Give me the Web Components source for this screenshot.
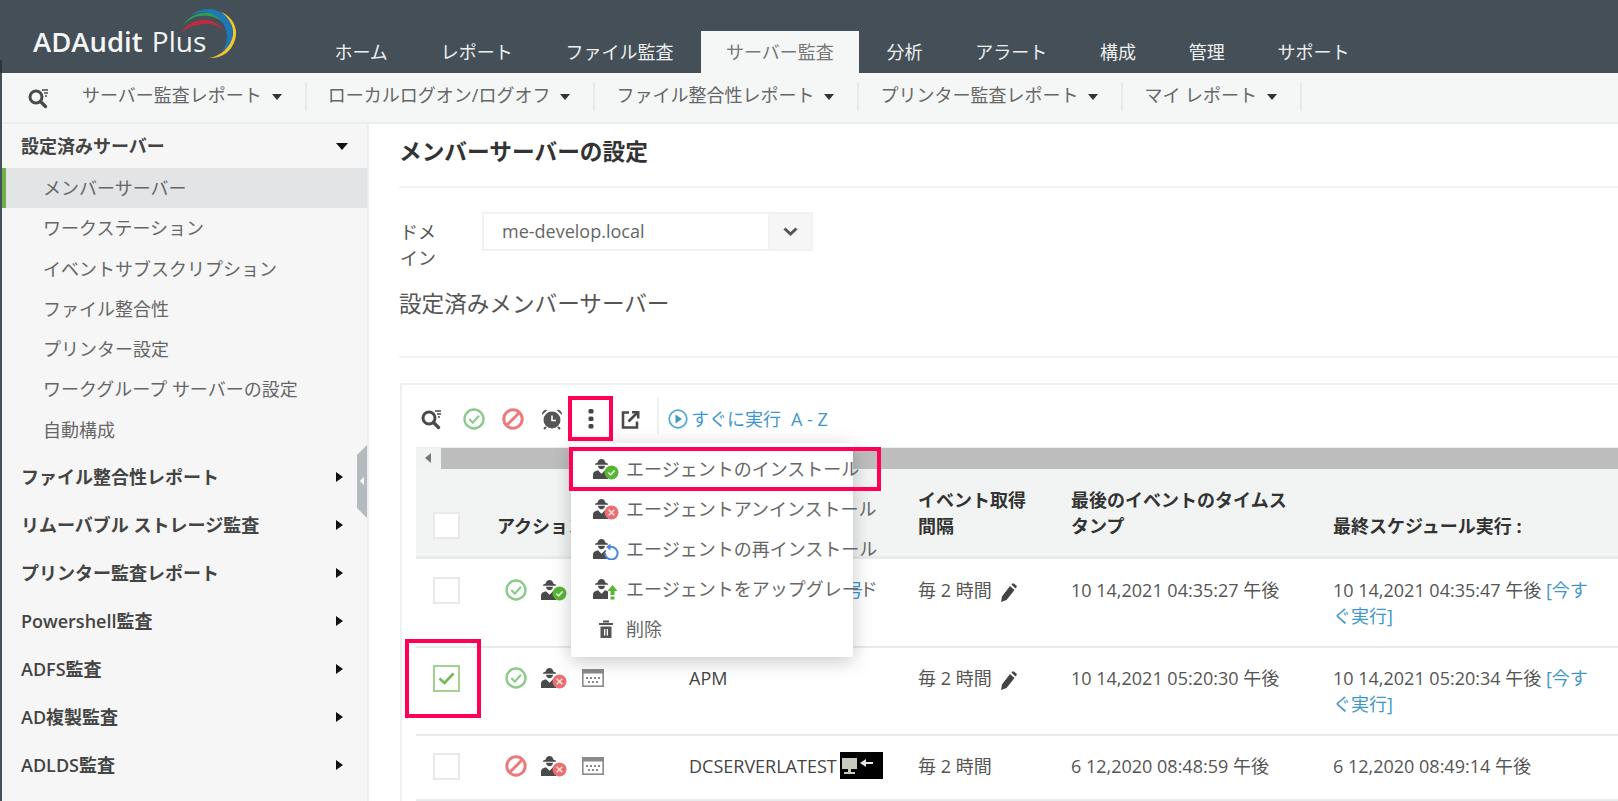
<!DOCTYPE html>
<html lang="ja">
<head>
<meta charset="utf-8">
<title>ADAudit Plus</title>
<style>
html, body { margin: 0; height: 801px; overflow: hidden; background: #fff; }
body { font: 18px/26px "Open Sans", "Noto Sans CJK JP", sans-serif; color: #555; }
</style>
</head>
<body>
<aa-page></aa-page>

<script>
// small svg icons, all drawn by hand
var AGENT = `<path d="M9.500 1c2 0 3.500 1.400 3.800 3.400l2.700 1.300v1H3v-1l2.700-1.300C6 2.400 7.500 1 9.500 1z" fill="#4a4a4a"/><path d="M6 7.800h7c-.2 2-1.500 3.500-3.500 3.500S6.200 9.800 6 7.800z" fill="#4a4a4a"/><path d="M1 21v-4.500c0-2 1.800-3.500 5-4.200l3.500 3.500 3.500-3.500c1 .2 2 .5 3 1.200V21z" fill="#4a4a4a"/>`;
var ICONS = {
  search: `<svg width="24" height="22" viewBox="0 0 24 22" fill="none" stroke="#4a4a4a"><circle cx="9" cy="10" r="6" stroke-width="3"/><path d="M13.500 14.500l5 5" stroke-width="3.400" stroke-linecap="round"/><path d="M15 3h6M17 6h4M18 9h2" stroke-width="1.300"/></svg>`,
  ok: `<svg width="22" height="22" viewBox="0 0 22 22" fill="none" stroke="#8ccb8c" stroke-width="2.400"><circle cx="11" cy="11" r="9.500"/><path d="M6.300 11l3.500 3.700 6.200-7" stroke-width="2.200"/></svg>`,
  stop: `<svg width="22" height="22" viewBox="0 0 22 22" fill="none" stroke="#ec7a7c" stroke-width="3"><circle cx="11" cy="11" r="9.200"/><path d="M4.800 17.200L17.200 4.800"/></svg>`,
  clock: `<svg width="22" height="22" viewBox="0 0 22 22"><circle cx="11" cy="12" r="8.500" fill="#555"/><path d="M1 7a4.500 4.500 0 0 1 5.500-5zM21 7a4.500 4.500 0 0 0-5.500-5z" fill="#555"/><path d="M5 19l-2 2M17 19l2 2" stroke="#555" stroke-width="2"/><path d="M11 7.500V12.500H15" fill="none" stroke="#fff" stroke-width="1.600"/></svg>`,
  kebab: `<svg width="6" height="20" viewBox="0 0 6 20" fill="#444"><rect x=".5" width="5" height="4.500" rx="1.500"/><rect x=".5" y="7.500" width="5" height="4.500" rx="1.500"/><rect x=".5" y="15" width="5" height="4.500" rx="1.500"/></svg>`,
  share: `<svg width="20" height="20" viewBox="0 0 20 20" fill="none" stroke="#4a4a4a" stroke-width="2.600"><path d="M8 3.500H2v15h14v-6"/><path d="M7.500 12.500L16.500 3.500"/><path d="M11 2h7.500v7.500h-2.600V4.600h-4.900z" fill="#4a4a4a" stroke="none"/></svg>`,
  play: `<svg width="20" height="20" viewBox="0 0 20 20"><circle cx="10" cy="10" r="8.800" fill="none" stroke="#55a9d8" stroke-width="1.800"/><path d="M7.500 5.500l6.500 4.500-6.500 4.500z" fill="#3f97c9"/></svg>`,
  agentok: `<svg width="27" height="22" viewBox="0 0 27 22">${AGENT}<circle cx="19.500" cy="14.500" r="7" fill="#5ab536"/><path d="M16.300 14.500l2.300 2.400 4.100-4.500" fill="none" stroke="#dff3d5" stroke-width="1.600"/></svg>`,
  agentx: `<svg width="27" height="22" viewBox="0 0 27 22">${AGENT}<circle cx="19.500" cy="14.500" r="7" fill="#ea6f71"/><path d="M16.700 11.700l5.600 5.600M22.300 11.700l-5.600 5.600" stroke="#fbe3e3" stroke-width="1.500"/></svg>`,
  agentre: `<svg width="27" height="22" viewBox="0 0 27 22">${AGENT}<path d="M16 9.800a6.300 6.300 0 1 1-3 5" fill="#fff" stroke="#4a86e0" stroke-width="2"/><path d="M18.500 5.500v7l-4.500-3.500z" fill="#4a86e0"/></svg>`,
  agentup: `<svg width="27" height="22" viewBox="0 0 27 22">${AGENT}<path d="M20.500 7l5 6h-3v4h-4v-4h-3z" fill="#57b531"/><rect x="18.500" y="18.500" width="4" height="3" fill="#57b531"/></svg>`,
  trash: `<svg width="16" height="18" viewBox="0 0 16 18" fill="#555"><rect x="1" y="3" width="14" height="2"/><rect x="5" y=".5" width="6" height="2"/><path d="M2.500 6.500h11V18h-11z"/><path d="M6 9h1.300v6.500H6zM8.700 9H10v6.500H8.700z" fill="#fff"/></svg>`,
  sched: `<svg width="22" height="18" viewBox="0 0 22 18"><rect x=".8" y=".8" width="20.400" height="16.400" fill="#fff" stroke="#8a8a8a" stroke-width="1.600"/><rect x="1" y="1" width="20" height="3.500" fill="#8a8a8a"/><path d="M4 8h2v2H4zM8 8h2v2H8zM12 8h2v2h-2zM16 8h2v2h-2zM6 12h2v2H6zM10 12h2v2h-2zM14 12h2v2h-2z" fill="#8a8a8a"/></svg>`,
  pencil: `<svg width="20" height="20" viewBox="0 0 20 20" fill="#444"><path d="M3 19l1-5.500L12 3l4.500 4-8 10z"/><path d="M13.500 1.500l1-1a1 1 0 0 1 1.400 0l2.600 2.300a1 1 0 0 1 0 1.400l-1 1.300z"/></svg>`,
  chevron: `<svg width="15" height="9" viewBox="0 0 15 9" fill="none" stroke="#555" stroke-width="3"><path d="M1.500 1.500l6 5.500 6-5.500"/></svg>`,
  remote: `<svg width="43" height="27" viewBox="0 0 43 27"><rect width="43" height="27" fill="#000"/><rect x="2" y="6" width="15" height="11" fill="#c9c9bf"/><rect x="8" y="17" width="3" height="3" fill="#c9c9bf"/><rect x="4" y="20" width="11" height="2" fill="#c9c9bf"/><path d="M20 11l6-4v3h7v2h-7v3z" fill="#e6e6e6"/></svg>`
};

class AaIcon extends HTMLElement {
  connectedCallback() {
    this.attachShadow({mode: "open"});
    this.shadowRoot.innerHTML = `<style>:host{display:inline-flex;align-items:center;justify-content:center;line-height:0}</style>` + ICONS[this.getAttribute("name")];
  }
}
customElements.define("aa-icon", AaIcon);

// logo + main tabs
class AaHeader extends HTMLElement {
  connectedCallback() {
    var tabs = ["ホーム", "レポート", "ファイル監査", "サーバー監査", "分析", "アラート", "構成", "管理", "サポート"];
    this.attachShadow({mode: "open"});
    this.shadowRoot.innerHTML = `
    <style>
    :host { display: flex; height: 73px; background: #444f58; position: relative; }
    :host::after { content: ""; position: absolute; left: 0; top: 60px; width: 2px; height: 13px; background: #2c333a; }
    .logo { position: relative; width: 308px; flex: none; }
    .logo span { position: absolute; left: 33px; top: 23px; font-size: 27.500px; line-height: 36px; color: #f4f6f6; white-space: nowrap; }
    .logo b { font-weight: 600; }
    .logo i { font-style: normal; font-weight: 400; font-size: 28px; margin-left: 2px; }
    .logo svg { position: absolute; left: 178px; top: 5px; }
    nav { display: flex; align-items: flex-end; }
    a { display: block; height: 42px; line-height: 42px; padding: 0 26.400px; color: #eef0f0; }
    a.on { background: #f5f6f6; color: #777; padding: 0 25.200px; margin: 0 1px 0 1px; }
    </style>
    <div class="logo">
      <span><b>ADAudit</b> <i>Plus</i></span>
      <svg width="62" height="58" viewBox="0 0 62 58">
        <path d="M4 28C8 17 24 12 36 17c4 2 8 5 10 9-5-5-12-8-20-7C17 20 9 22 4 28z" fill="#c22b3d"/>
        <path d="M5 21C11 9 27 4 40 10c5 3 9 8 11 14-5-7-12-12-21-13C20 10 11 13 5 21z" fill="#2f9c55"/>
        <path d="M13 11C22 2 37 2 46 10c8 7 11 18 7 27-2 4-5 7-9 9 5-6 6-14 4-21C45 15 37 8 27 7c-5 0-10 1-14 4z" fill="#1b79b8"/>
        <path d="M43 7c8 3 14 10 15 19 1 13-9 27-24 27h-3c12-2 22-11 24-23 1-9-4-17-12-23z" fill="#f1c52f"/>
      </svg>
    </div>
    <nav>${tabs.map(t => `<a class="${t == "サーバー監査" ? "on" : ""}">${t}</a>`).join("")}</nav>`;
  }
}
customElements.define("aa-header", AaHeader);

// second bar with the report menus
class AaSubnav extends HTMLElement {
  connectedCallback() {
    var items = ["サーバー監査レポート", "ローカルログオン/ログオフ", "ファイル整合性レポート", "プリンター監査レポート", "マイ レポート"];
    this.attachShadow({mode: "open"});
    this.shadowRoot.innerHTML = `
    <style>
    :host { display: flex; align-items: center; height: 49px; background: #f5f6f6; border-bottom: 2px solid #e9eeee; color: #666; }
    .find { width: 57px; padding-left: 25px; box-sizing: border-box; flex: none; display: flex; }
    .item { display: flex; align-items: center; height: 28px; box-sizing: border-box; margin-bottom: 2px; padding: 0 23px 3px 21px; border-right: 2px solid #e6eaea; white-space: nowrap; }
    .find + .item { padding-left: 23px; }
    .caret { width: 0; height: 0; border: 5.500px solid transparent; border-top: 6px solid #333; border-bottom: 0; margin: 3px 0 0 10px; }
    </style>
    <div class="find"><aa-icon name="search"></aa-icon></div>
    ${items.map(t => `<div class="item">${t}<span class="caret"></span></div>`).join("")}`;
  }
}
customElements.define("aa-subnav", AaSubnav);

class AaSidebar extends HTMLElement {
  connectedCallback() {
    var subs = ["メンバーサーバー", "ワークステーション", "イベントサブスクリプション", "ファイル整合性", "プリンター設定", "ワークグループ サーバーの設定", "自動構成"];
    var groups = ["ファイル整合性レポート", "リムーバブル ストレージ監査", "プリンター監査レポート", "Powershell監査", "ADFS監査", "AD複製監査", "ADLDS監査"];
    this.attachShadow({mode: "open"});
    this.shadowRoot.innerHTML = `
    <style>
    :host { display: block; width: 367px; box-sizing: border-box; flex: none; background: #f6f6f6; border-right: 2px solid #e9eeee; position: relative; }
    .head { display: flex; align-items: center; justify-content: space-between; height: 44px; padding: 0 19px 0 19px; font-weight: 600; color: #444; }
    .sub { height: 40.300px; line-height: 40px; padding-left: 41px; color: #666; white-space: nowrap; }
    .sub.on { background: #e3e4e5; box-shadow: inset 4px 0 #6fb04a; }
    .group { display: flex; align-items: center; justify-content: space-between; height: 48px; padding: 0 24px 0 19px; font-weight: 600; color: #444; white-space: nowrap; }
    .groups { margin-top: 3px; }
    .down { width: 0; height: 0; border: 6px solid transparent; border-top: 7px solid #111; border-bottom: 0; }
    .right { width: 0; height: 0; border: 5.500px solid transparent; border-left: 7px solid #111; border-right: 0; }
    .grip { position: absolute; right: 0; top: 321px; width: 10px; height: 73px; background: #b4bbbe; clip-path: polygon(0 10px, 100% 0, 100% 100%, 0 calc(100% - 10px)); }
    .grip::after { content: ""; position: absolute; left: 3px; top: 32px; border: 4px solid transparent; border-right: 4px solid #fff; border-left: 0; }
    </style>
    <div class="head">設定済みサーバー<span class="down"></span></div>
    ${subs.map((s, i) => `<div class="sub ${i == 0 ? "on" : ""}">${s}</div>`).join("")}
    <div class="groups">${groups.map(g => `<div class="group">${g}<span class="right"></span></div>`).join("")}</div>
    <div class="grip"></div>`;
  }
}
customElements.define("aa-sidebar", AaSidebar);

// one table row, the columns are the same for head and body
class AaRow extends HTMLElement {
  connectedCallback() {
    this.attachShadow({mode: "open"});
    this.shadowRoot.innerHTML = `
    <style>
    :host { display: grid; grid-template-columns: 81px 192px 229px 153px 262px 265px; padding-top: 18px; padding-bottom: 16.500px; border-bottom: 2px solid #e6ebeb; min-height: 30px; }
    :host([head]) { height: 90px; box-sizing: border-box; padding-top: 0; padding-bottom: 17px; background: #f2f4f4; border-bottom-width: 3px; align-items: end; font-weight: 700; color: #333; }
    </style>
    <slot></slot>`;
  }
}
customElements.define("aa-row", AaRow);

class AaCheck extends HTMLElement {
  connectedCallback() {
    var on = this.hasAttribute("checked");
    this.attachShadow({mode: "open"});
    this.shadowRoot.innerHTML = `
    <style>
    :host { display: block; margin-left: 17px; width: 27px; height: 27px; box-sizing: border-box; background: #fff; border: 2px solid ${on ? "#a3d18f" : "#e9e9e9"}; }
    svg { display: block; margin: 5px 0 0 3px; }
    </style>
    ${on ? `<svg width="17" height="13" viewBox="0 0 17 13" fill="none" stroke="#74b856" stroke-width="2.600"><path d="M1.500 6.500l5 4.500 9-9.500"/></svg>` : ""}`;
  }
}
customElements.define("aa-check", AaCheck);

// popup under the three dots
class AaMenu extends HTMLElement {
  connectedCallback() {
    var items = [["agentok", "エージェントのインストール"], ["agentx", "エージェントアンインストール"], ["agentre", "エージェントの再インストール"], ["agentup", "エージェントをアップグレード"], ["trash", "削除"]];
    this.attachShadow({mode: "open"});
    this.shadowRoot.innerHTML = `
    <style>
    :host { position: absolute; left: 169px; top: 58px; width: 282px; height: 214px; box-sizing: border-box; padding-top: 6px; background: #fff; box-shadow: 0 4px 18px rgba(0,0,0,.22); color: #666; }
    div { display: flex; align-items: center; height: 40px; white-space: nowrap; }
    aa-icon { width: 27px; margin: 0 7px 0 21px; }
    </style>
    ${items.map(i => `<div><aa-icon name="${i[0]}"></aa-icon>${i[1]}</div>`).join("")}`;
  }
}
customElements.define("aa-menu", AaMenu);

// the red boxes somebody put on the screenshot
class AaMark extends HTMLElement {
  connectedCallback() {
    this.attachShadow({mode: "open"});
    this.shadowRoot.innerHTML = `<style>:host{position:absolute;box-sizing:border-box;border:4.500px solid #ff0055;z-index:5}</style>`;
  }
}
customElements.define("aa-mark", AaMark);

class AaPanel extends HTMLElement {
  connectedCallback() {
    this.attachShadow({mode: "open"});
    this.shadowRoot.innerHTML = `
    <style>
    :host { display: block; position: relative; margin-left: 1px; border: 2px solid #eef1f1; border-right: 0; border-bottom: 0; width: 1300px; }
    .tools { display: flex; align-items: center; height: 56px; padding: 6px 0 0 10px; }
    .tools aa-icon { width: 40px; }
    .tools aa-icon.ok { margin-left: 2px; margin-right: -1px; }
    .tools aa-icon.stop { margin-right: -1px; }
    .tools aa-icon.clock { margin-right: -1px; }
    .sep { width: 2px; height: 36px; background: #eef1f1; margin: -6px 9px 0 6px; }
    .tools .play { width: 20px; margin-right: 3px; }
    .run { color: #3f97c9; white-space: nowrap; }
    .az { color: #3f97c9; margin-left: 10px; }
    .table { margin-left: 14px; }
    .scroll { display: flex; height: 21px; background: #f1f3f3; border-top: 1px solid #eef0f0; }
    .scroll i { width: 25px; position: relative; }
    .scroll i::after { content: ""; position: absolute; left: 9px; top: 5px; border: 5px solid transparent; border-right: 6px solid #777; border-left: 0; }
    .scroll b { flex: 1; background: #bdbdbd; }
    .ic { display: flex; gap: 13px; align-items: center; height: 26px; padding-left: 8px; }
    .ic aa-icon[name=sched] { margin-left: 2px; }
    .name { display: flex; align-items: center; height: 26px; color: #444; }
    .name aa-icon { margin-left: 3px; }
    .int { display: flex; align-items: center; gap: 6px; height: 26px; }
    .int aa-icon { margin-top: 5px; }
    a { color: #3f97c9; }
    </style>
    <div class="tools">
      <aa-icon name="search"></aa-icon><aa-icon class="ok" name="ok"></aa-icon><aa-icon class="stop" name="stop"></aa-icon><aa-icon class="clock" name="clock"></aa-icon><aa-icon name="kebab"></aa-icon><aa-icon name="share"></aa-icon>
      <span class="sep"></span><aa-icon class="play" name="play"></aa-icon><span class="run">すぐに実行</span><span class="az">A - Z</span>
    </div>
    <div class="table">
      <div class="scroll"><i></i><b></b></div>
      <aa-row head>
        <aa-check></aa-check><div>アクション</div><div></div><div>イベント取得<br>間隔</div><div>最後のイベントのタイムス<br>タンプ</div><div>最終スケジュール実行 :</div>
      </aa-row>
      <aa-row>
        <aa-check></aa-check>
        <div class="ic"><aa-icon name="ok"></aa-icon><aa-icon name="agentok"></aa-icon></div>
        <div class="name"><a style="margin-left:156px">号</a></div>
        <div class="int">毎 2 時間<aa-icon name="pencil"></aa-icon></div>
        <div>10 14,2021 04:35:27 午後</div>
        <div>10 14,2021 04:35:47 午後 <a>[今すぐ実行]</a></div>
      </aa-row>
      <aa-row style="padding-top:17.500px;padding-bottom:17px">
        <aa-check checked></aa-check>
        <div class="ic"><aa-icon name="ok"></aa-icon><aa-icon name="agentx"></aa-icon><aa-icon name="sched"></aa-icon></div>
        <div class="name">APM</div>
        <div class="int">毎 2 時間<aa-icon name="pencil"></aa-icon></div>
        <div>10 14,2021 05:20:30 午後</div>
        <div>10 14,2021 05:20:34 午後 <a>[今すぐ実行]</a></div>
      </aa-row>
      <aa-row style="padding-top:16.500px">
        <aa-check></aa-check>
        <div class="ic"><aa-icon name="stop"></aa-icon><aa-icon name="agentx"></aa-icon><aa-icon name="sched"></aa-icon></div>
        <div class="name">DCSERVERLATEST<aa-icon name="remote"></aa-icon></div>
        <div class="int">毎 2 時間</div>
        <div>6 12,2020 08:48:59 午後</div>
        <div>6 12,2020 08:49:14 午後</div>
      </aa-row>
    </div>
    <aa-menu></aa-menu>
    <aa-mark style="left:166px;top:11px;width:45px;height:45px"></aa-mark>
    <aa-mark style="left:167px;top:62px;width:312px;height:44px"></aa-mark>
    <aa-mark style="left:3px;top:254px;width:76px;height:79px"></aa-mark>`;
  }
}
customElements.define("aa-panel", AaPanel);

class AaContent extends HTMLElement {
  connectedCallback() {
    this.attachShadow({mode: "open"});
    this.shadowRoot.innerHTML = `
    <style>
    :host { display: block; flex: 1; min-width: 0; padding-left: 30px; }
    h1 { margin: 0; height: 62px; line-height: 56px; font-size: 22.700px; font-weight: 700; color: #333; border-bottom: 2px solid #f3f5f5; }
    .form { display: flex; margin-top: 24px; height: 59px; }
    label { width: 40px; margin: 7px 42px 0 1px; color: #555; }
    .select { display: flex; width: 331px; height: 39px; box-sizing: border-box; border: 2px solid #f0f3f3; line-height: 35px; color: #666; }
    .select span { flex: 1; padding-left: 18px; }
    .select i { width: 42px; background: #f6f6f6; display: flex; align-items: center; justify-content: center; border-left: 1px solid #eef1f1; }
    h2 { margin: 18px 0 0; padding-bottom: 37px; font-size: 22.600px; line-height: 30px; font-weight: 400; color: #555; border-bottom: 2px solid #f3f5f5; }
    aa-panel { margin-top: 25px; }
    </style>
    <h1>メンバーサーバーの設定</h1>
    <div class="form">
      <label>ドメイン</label>
      <div class="select"><span>me-develop.local</span><i><aa-icon name="chevron"></aa-icon></i></div>
    </div>
    <h2>設定済みメンバーサーバー</h2>
    <aa-panel></aa-panel>`;
  }
}
customElements.define("aa-content", AaContent);

class AaPage extends HTMLElement {
  connectedCallback() {
    this.attachShadow({mode: "open"});
    this.shadowRoot.innerHTML = `
    <style>
    :host { display: block; height: 801px; overflow: hidden; }
    .below { border-left: 2px solid #444f58; height: 728px; box-sizing: border-box; }
    .cols { display: flex; height: 677px; }
    </style>
    <aa-header></aa-header>
    <div class="below">
      <aa-subnav></aa-subnav>
      <div class="cols"><aa-sidebar></aa-sidebar><aa-content></aa-content></div>
    </div>`;
  }
}
customElements.define("aa-page", AaPage);
</script>
</body>
</html>
